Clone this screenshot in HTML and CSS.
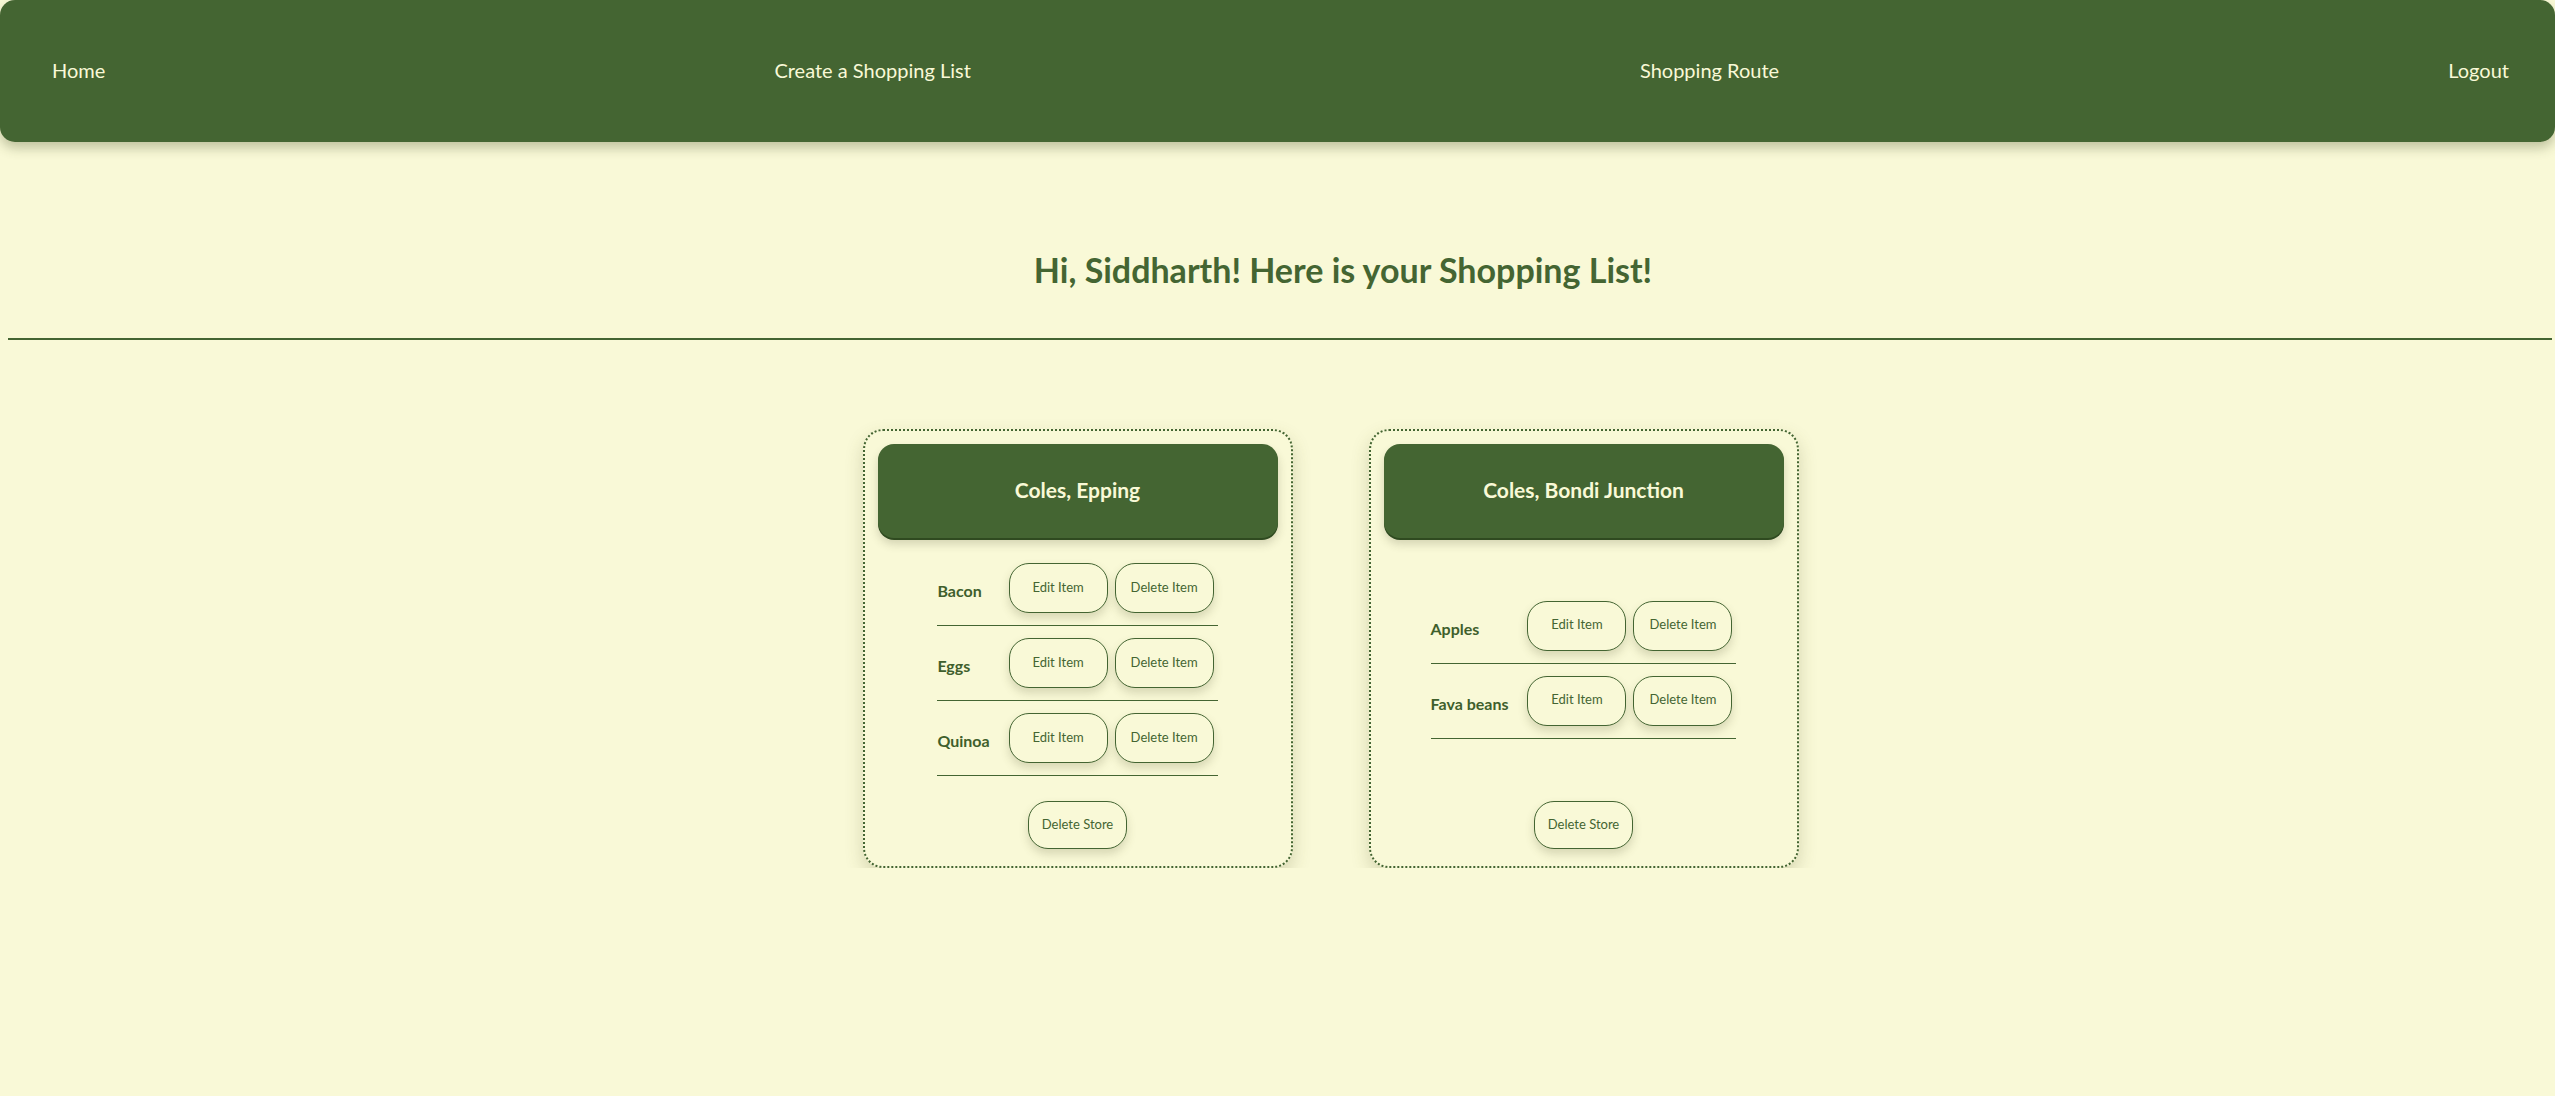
FILE: index.html
```html
<!DOCTYPE html>
<html lang="en">
<head>
<meta charset="utf-8">
<title>Shopping List</title>
<link rel="stylesheet" href="styles.css">
</head>
<body>
<nav class="topnav">
  <a class="navlink" href="#">Home</a>
  <a class="navlink" href="#">Create a Shopping List</a>
  <a class="navlink" href="#">Shopping Route</a>
  <a class="navlink" href="#">Logout</a>
</nav>
<h1 class="greeting">Hi, Siddharth! Here is your Shopping List!</h1>
<hr class="divider">
<main class="stores">
  <section class="store">
    <header class="store-head">Coles, Epping</header>
    <div class="store-body">
      <table class="items">
        <tr><td class="item-name">Bacon</td><td class="cell-edit"><button class="btn">Edit Item</button></td><td class="cell-del"><button class="btn">Delete Item</button></td></tr>
        <tr><td class="item-name">Eggs</td><td class="cell-edit"><button class="btn">Edit Item</button></td><td class="cell-del"><button class="btn">Delete Item</button></td></tr>
        <tr><td class="item-name">Quinoa</td><td class="cell-edit"><button class="btn">Edit Item</button></td><td class="cell-del"><button class="btn">Delete Item</button></td></tr>
      </table>
    </div>
    <button class="btn btn-store">Delete Store</button>
  </section>
  <section class="store">
    <header class="store-head">Coles, Bondi Junction</header>
    <div class="store-body">
      <table class="items">
        <tr><td class="item-name">Apples</td><td class="cell-edit"><button class="btn">Edit Item</button></td><td class="cell-del"><button class="btn">Delete Item</button></td></tr>
        <tr><td class="item-name">Fava beans</td><td class="cell-edit"><button class="btn">Edit Item</button></td><td class="cell-del"><button class="btn">Delete Item</button></td></tr>
      </table>
    </div>
    <button class="btn btn-store">Delete Store</button>
  </section>
</main>
</body>
</html>
```
FILE: styles.css
```css
html, body {
  margin: 0;
  padding: 0;
  background: #f9f9d7;
  font-family: Lato, "Open Sans", sans-serif;
  color: #44652f;
}

.topnav {
  height: 142px;
  background: #446532;
  border-radius: 15px;
  box-shadow: 0 6px 12px rgba(60, 70, 30, 0.3);
  display: flex;
  align-items: center;
  justify-content: space-between;
  padding: 0 46px 2px 52px;
  box-sizing: border-box;
}

.navlink {
  color: #f9f9d7;
  text-decoration: none;
  font-size: 20px;
}

.greeting {
  margin: 108px 0 0;
  padding-left: 131px;
  height: 50px;
  line-height: 40px;
  text-align: center;
  font-size: 34px;
  font-weight: 700;
  color: #446532;
}

.divider {
  margin: 38px 3px 0 8px;
  border: 0;
  height: 2px;
  background: #446532;
}

.stores {
  display: flex;
  justify-content: center;
  gap: 76px;
  padding: 0 0 0 106px;
  margin-top: 89px;
}

.store {
  width: 430px;
  box-sizing: border-box;
  border: 2px dotted #446532;
  border-radius: 20px;
  padding: 13px 13px 17px;
  display: flex;
  flex-direction: column;
  align-items: center;
  box-shadow: 0 8px 18px rgba(90, 90, 40, 0.22);
}

.store-head {
  align-self: stretch;
  height: 94px;
  background: #446532;
  border-radius: 16px;
  box-shadow: 0 2px 0 #2f4a20, 0 6px 10px rgba(60, 60, 30, 0.2);
  color: #f9f9d7;
  font-weight: 700;
  font-size: 21px;
  display: flex;
  align-items: center;
  justify-content: center;
  padding-bottom: 4px;
  box-sizing: border-box;
}

.store-body {
  flex: 1;
  display: flex;
  align-items: center;
  justify-content: center;
  padding: 13px 0;
}

.items {
  border-collapse: collapse;
}

.items tr {
  border-bottom: 1.5px solid #446532;
}

.items td {
  padding: 12px 0;
}

.item-name {
  font-weight: 700;
  font-size: 16px;
  padding-right: 19px !important;
  padding-top: 17px !important;
  color: #3f5f2c;
}

.cell-edit {
  padding-right: 7px !important;
}

.cell-del {
  padding-right: 4px !important;
}

.btn {
  display: block;
  width: 99px;
  height: 50px;
  background: #f9f9d7;
  border: 1.5px solid #446532;
  border-radius: 20px;
  color: #446532;
  font-family: Lato, "Open Sans", sans-serif;
  font-size: 13px;
  box-shadow: 0 5px 10px rgba(80, 80, 40, 0.2);
  padding: 0;
  padding-bottom: 3px;
}

.btn-store {
  margin-top: 12px;
  height: 48px;
}
```
